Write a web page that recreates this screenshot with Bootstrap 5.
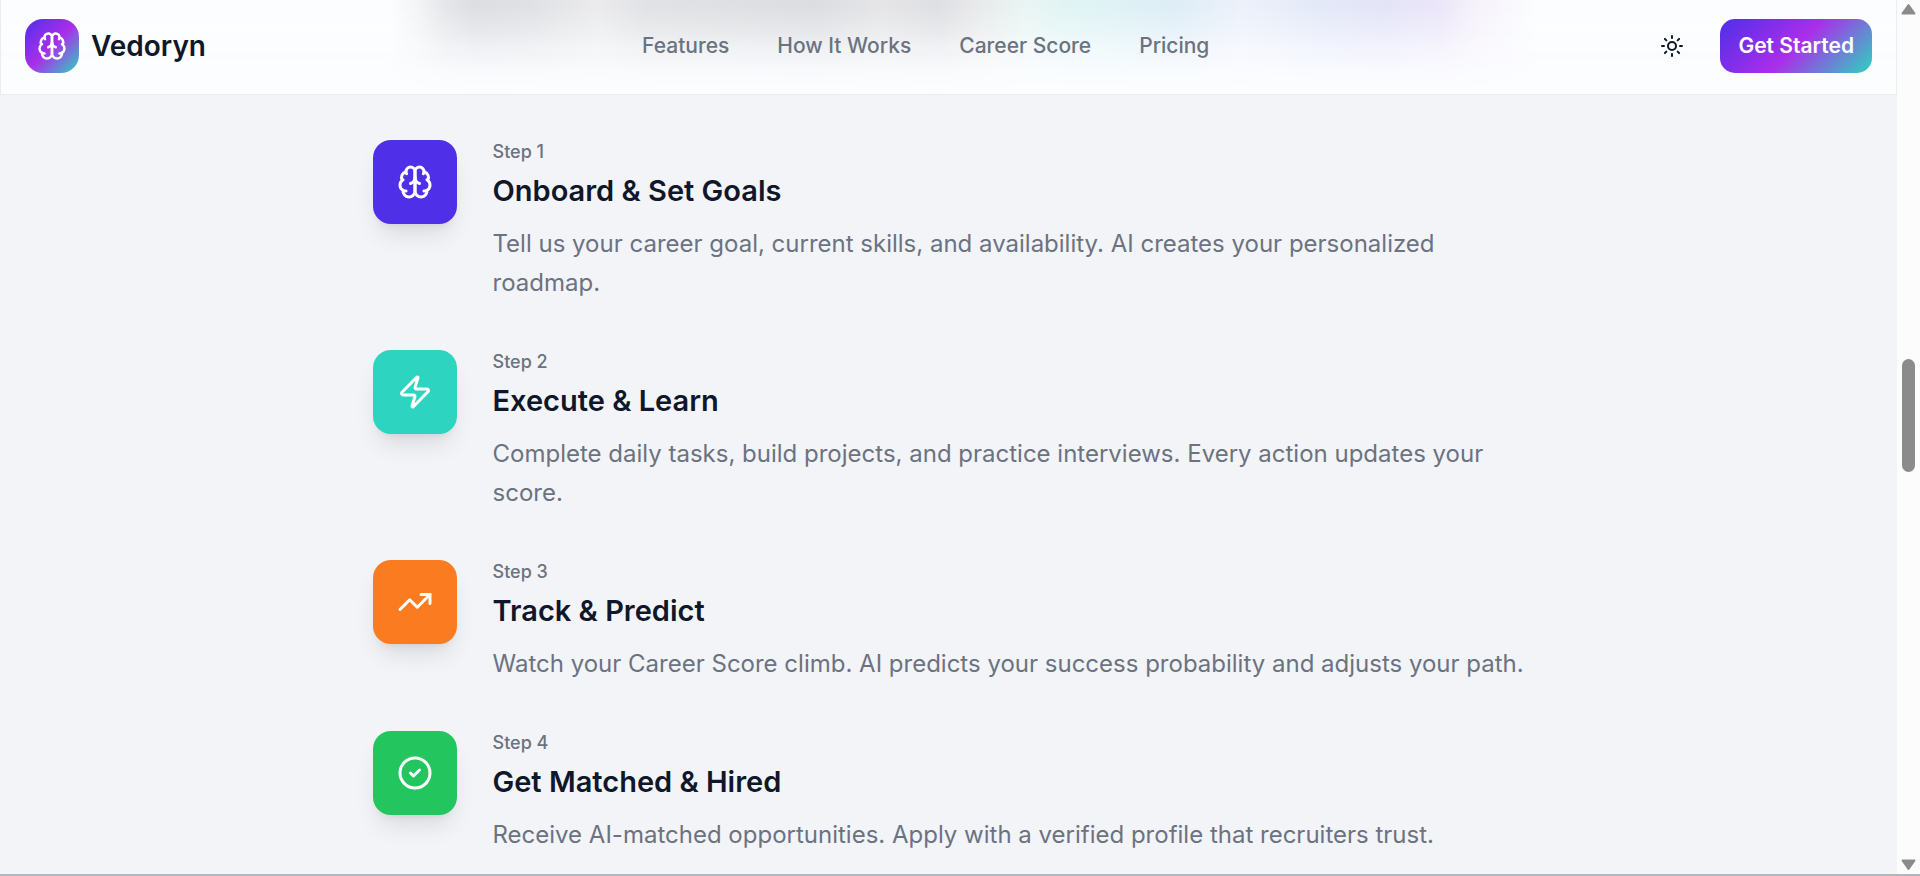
<!DOCTYPE html>
<html lang="en">
<head>
<meta charset="utf-8">
<meta name="viewport" content="width=device-width, initial-scale=1">
<title>Vedoryn</title>
<link rel="stylesheet" href="https://cdn.jsdelivr.net/npm/bootstrap@5.3.0/dist/css/bootstrap.min.css">
<style>
  :root { --ink: #0f172a; --muted: #6b7280; --brand: linear-gradient(135deg, #4f2fe8 0%, #a92eea 50%, #2dd4bf 100%); }
  body { font-family: Inter, "Liberation Sans", sans-serif; background: #f3f4f8; color: var(--ink); }
  .window { border-bottom: 2px solid #b1b6be; }
  .icon { fill: none; stroke: currentColor; stroke-width: 2; stroke-linecap: round; stroke-linejoin: round; display: block; }

  .topbar { background: #fcfdff; border: 1px solid #ececef; border-top: 0; padding: 19px 24px 21px; isolation: isolate; }
  .glow { z-index: -1; pointer-events: none;
    background: linear-gradient(to right, #fcfdff 20.5%, #f3f4f6 22%, #e5e6e9 23.5%, #dcdee2 25%, #dfe1e4 28%, #ebebed 31.5%, #e1e2e5 34%, #dfe0e3 38%, #dbdde1 43%, #e5e5e7 46.5%, #dedfe3 49.5%, #e9e9eb 51.5%, #e9f5f3 54%, #e1f4f4 56%, #dff2f5 58.5%, #deedf6 62%, #edf1fa 65.5%, #e4e9f8 69.5%, #e4e4f7 73%, #ebe6f9 76%, #f6f3fb 78%, #fcfdff 81%);
    -webkit-mask-image: linear-gradient(to bottom, #000 5%, rgba(0,0,0,.8) 25%, rgba(0,0,0,.4) 50%, rgba(0,0,0,.1) 75%, transparent);
    mask-image: linear-gradient(to bottom, #000 5%, rgba(0,0,0,.8) 25%, rgba(0,0,0,.4) 50%, rgba(0,0,0,.1) 75%, transparent); }
  .brand { gap: 12px; color: var(--ink); font-size: 28px; line-height: 36px; font-weight: 600; }
  .brand-tile { width: 54px; height: 54px; border-radius: 18px; background: var(--brand); color: #fff; }
  .links { gap: 48px; font-size: 21px; line-height: 30px; font-weight: 500; }
  .links a { color: var(--muted); }
  .actions { gap: 21px; }
  .btn-theme { width: 54px; height: 54px; color: var(--ink); }
  .btn-start { height: 54px; padding: 0 18px; border: 0; border-radius: 15px; background: var(--brand); color: #fff; font-size: 21px; line-height: 30px; font-weight: 600; }
  .btn-start:hover { background: var(--brand); color: #fff; }

  .steps { max-width: 1152px; padding-top: 45px; gap: 48px; }
  .step { gap: 36px; }
  .step-tile { width: 84px; height: 84px; border-radius: 18px; color: #fff; box-shadow: 0 15px 23px -5px rgba(0,0,0,.1), 0 6px 9px -6px rgba(0,0,0,.1); }
  .step-no { font-size: 18px; line-height: 24px; font-weight: 500; color: var(--muted); margin-bottom: 6px; }
  .step h3 { font-size: 29px; line-height: 42px; font-weight: 600; margin-bottom: 12px; }
  .step-text { font-size: 24px; line-height: 39px; color: var(--muted); }
  .indigo { background: #4f2fe8; } .teal { background: #2dd4bf; } .orange { background: #fa7b20; } .green { background: #22c55e; }

  .scroll-rail { width: 23px; background: #fcfcfc; color: #8b8b8b; padding: 3px 0; }
  .rail-upper { flex: 343; } .rail-lower { flex: 386; }
  .rail-thumb { flex: 112; width: 13px; border-radius: 7px; background: currentColor; }
</style>
</head>
<body>
<div class="window d-flex vh-100 overflow-hidden">
  <div class="flex-fill overflow-hidden">
    <header class="topbar position-relative d-flex align-items-center justify-content-between">
      <div class="glow position-absolute top-0 start-0 w-100 h-100"></div>
      <a href="#" class="brand d-flex align-items-center text-decoration-none">
        <span class="brand-tile d-flex align-items-center justify-content-center">
          <svg class="icon" width="30" height="30" viewBox="0 0 24 24" aria-hidden="true"><g id="brain"><path d="M12 5a3 3 0 1 0-5.997.125 4 4 0 0 0-2.526 5.77 4 4 0 0 0 .556 6.588A4 4 0 1 0 12 18Z"/><path d="M12 5a3 3 0 1 1 5.997.125 4 4 0 0 1 2.526 5.77 4 4 0 0 1-.556 6.588A4 4 0 1 1 12 18Z"/><path d="M15 13a4.5 4.5 0 0 1-3-4 4.5 4.5 0 0 1-3 4"/><path d="M17.599 6.5a3 3 0 0 0 .399-1.375"/><path d="M6.003 5.125A3 3 0 0 0 6.401 6.5"/><path d="M3.477 10.896a4 4 0 0 1 .585-.396"/><path d="M19.938 10.5a4 4 0 0 1 .585.396"/><path d="M6 18a4 4 0 0 1-1.967-.516"/><path d="M19.967 17.484A4 4 0 0 1 18 18"/></g></svg>
        </span>
        <span>Vedoryn</span>
      </a>
      <nav class="links d-flex">
        <a class="text-decoration-none" href="#">Features</a>
        <a class="text-decoration-none" href="#">How It Works</a>
        <a class="text-decoration-none" href="#">Career Score</a>
        <a class="text-decoration-none" href="#">Pricing</a>
      </nav>
      <div class="actions d-flex align-items-center">
        <button type="button" class="btn btn-theme border-0 p-0 d-flex align-items-center justify-content-center" aria-label="Toggle theme">
          <svg class="icon" width="24" height="24" viewBox="0 0 24 24" aria-hidden="true"><circle cx="12" cy="12" r="4"/><path d="M12 2v2M12 20v2M4.93 4.93l1.41 1.41M17.66 17.66l1.41 1.41M2 12h2M20 12h2M6.34 17.66l-1.41 1.41M19.07 4.93l-1.41 1.41"/></svg>
        </button>
        <button type="button" class="btn btn-start">Get Started</button>
      </div>
    </header>

    <main class="steps mx-auto d-flex flex-column">
      <section class="step d-flex align-items-start">
        <div class="step-tile indigo flex-shrink-0 d-flex align-items-center justify-content-center">
          <svg class="icon" width="36" height="36" viewBox="0 0 24 24" aria-hidden="true"><use href="#brain"/></svg>
        </div>
        <div>
          <div class="step-no">Step 1</div>
          <h3>Onboard &amp; Set Goals</h3>
          <p class="step-text mb-0">Tell us your career goal, current skills, and availability. AI creates your personalized roadmap.</p>
        </div>
      </section>
      <section class="step d-flex align-items-start">
        <div class="step-tile teal flex-shrink-0 d-flex align-items-center justify-content-center">
          <svg class="icon" width="36" height="36" viewBox="0 0 24 24" aria-hidden="true"><path d="M4 14a1 1 0 0 1-.78-1.63l9.9-10.2a.5.5 0 0 1 .86.46l-1.92 6.02A1 1 0 0 0 13 10h7a1 1 0 0 1 .78 1.63l-9.9 10.2a.5.5 0 0 1-.86-.46l1.92-6.02A1 1 0 0 0 11 14z"/></svg>
        </div>
        <div>
          <div class="step-no">Step 2</div>
          <h3>Execute &amp; Learn</h3>
          <p class="step-text mb-0">Complete daily tasks, build projects, and practice interviews. Every action updates your score.</p>
        </div>
      </section>
      <section class="step d-flex align-items-start">
        <div class="step-tile orange flex-shrink-0 d-flex align-items-center justify-content-center">
          <svg class="icon" width="36" height="36" viewBox="0 0 24 24" aria-hidden="true"><path d="M22 7l-8.5 8.5-5-5L2 17"/><path d="M16 7h6v6"/></svg>
        </div>
        <div>
          <div class="step-no">Step 3</div>
          <h3>Track &amp; Predict</h3>
          <p class="step-text mb-0">Watch your Career Score climb. AI predicts your success probability and adjusts your path.</p>
        </div>
      </section>
      <section class="step d-flex align-items-start">
        <div class="step-tile green flex-shrink-0 d-flex align-items-center justify-content-center">
          <svg class="icon" width="36" height="36" viewBox="0 0 24 24" aria-hidden="true"><circle cx="12" cy="12" r="10"/><path d="m9 12 2 2 4-4"/></svg>
        </div>
        <div>
          <div class="step-no">Step 4</div>
          <h3>Get Matched &amp; Hired</h3>
          <p class="step-text mb-0">Receive AI-matched opportunities. Apply with a verified profile that recruiters trust.</p>
        </div>
      </section>
    </main>
  </div>

  <div class="scroll-rail flex-shrink-0 d-flex flex-column align-items-center" aria-hidden="true">
    <svg width="15" height="12" viewBox="0 0 15 12"><path d="M7.500 2 13.500 10.500H1.500z" fill="currentColor" stroke="currentColor" stroke-width="2" stroke-linejoin="round"/></svg>
    <div class="rail-upper"></div>
    <div class="rail-thumb"></div>
    <div class="rail-lower"></div>
    <svg width="15" height="12" viewBox="0 0 15 12"><path d="M7.500 10 13.500 1.500H1.500z" fill="currentColor" stroke="currentColor" stroke-width="2" stroke-linejoin="round"/></svg>
  </div>
</div>
<script src="https://cdn.jsdelivr.net/npm/bootstrap@5.3.0/dist/js/bootstrap.bundle.min.js"></script>
</body>
</html>
